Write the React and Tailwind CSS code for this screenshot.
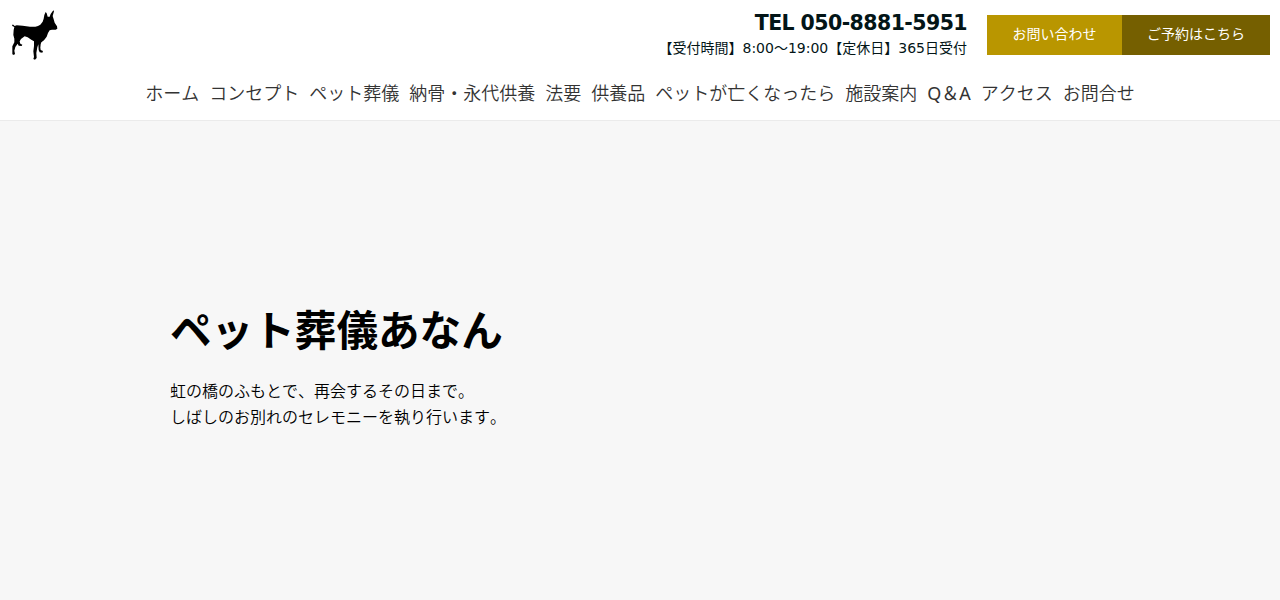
const navItems = [
  'ホーム',
  'コンセプト',
  'ペット葬儀',
  '納骨・永代供養',
  '法要',
  '供養品',
  'ペットが亡くなったら',
  '施設案内',
  'Q＆A',
  'アクセス',
  'お問合せ',
];

function DogLogo() {
  return (
    <svg viewBox="30 30 150 150" className="size-[50px]" aria-label="ペット葬儀あなん">
      <path
        fill="#000"
        d="M36 74 L40 74 L44 78 L50 76 L68 77 L90 80 L106 80 L114 78 L121 74 L128 65 L131 56 L133 45 L137 36 L140 40 L143 50 L149 50 L152 42 L160 31 L162 34 L158 48 L161 58 L164 68 L171 79 L172 86 L167 89 L156 89 L149 91 L144 99 L140 110 L132 121 L124 127 L122 133 L121 143 L122 150 L129 153 L127 158 L119 157 L116 150 L115 133 L112 142 L109 159 L110 174 L105 179 L100 177 L102 171 L100 154 L102 138 L102 124 L95 120 L83 112 L74 109 L63 117 L59 124 L61 131 L67 134 L65 138 L56 137 L53 131 L46 141 L43 152 L45 161 L42 165 L37 163 L37 139 L43 127 L43 116 L40 105 L41 90 L43 81 L37 78 Z"
      />
    </svg>
  );
}

export default function App() {
  return (
    <div className="flex h-[600px] flex-col overflow-hidden bg-[#f7f7f7] font-['DejaVu_Sans','Noto_Sans_CJK_JP',sans-serif] text-black [font-kerning:none]">
      <header className="flex h-[121px] shrink-0 flex-col border-b border-[#ebebeb] bg-white">
        <div className="flex h-[70px] items-start justify-between px-2.5 pt-2.5">
          <DogLogo />
          <div className="flex items-start gap-5">
            <div className="text-right text-[#031517]">
              <p className="pt-px text-[20.5px] leading-[25px] font-bold tracking-[-0.58px]">TEL 050-8881-5951</p>
              <p className="text-[14px] leading-[25px]">【受付時間】8:00～19:00【定休日】365日受付</p>
            </div>
            <div className="mt-[5px] flex h-10 text-[14px] leading-[38px] text-white">
              <a className="w-[135px] bg-[#b99600] text-center">お問い合わせ</a>
              <a className="w-[148px] bg-[#755f00] text-center">ご予約はこちら</a>
            </div>
          </div>
        </div>
        <nav className="flex h-[50px] justify-center gap-2.5 font-['Noto_Sans','Noto_Sans_CJK_JP',sans-serif] text-[18px] leading-[46px] text-[#333]">
          {navItems.map((item) => (
            <a
              key={item}
              className={item === 'Q＆A' ? 'whitespace-nowrap font-normal' : 'whitespace-nowrap font-[350]'}
            >
              {item}
            </a>
          ))}
        </nav>
      </header>
      <main className="flex flex-1 flex-col px-[170px] pt-[180px]">
        <h1 className="text-[41.6px] leading-[62px] font-bold">ペット葬儀あなん</h1>
        <p className="mt-4 text-[16px] leading-[26px] font-[350]">
          虹の橋のふもとで、再会するその日まで。
          <br />
          しばしのお別れのセレモニーを執り行います。
        </p>
      </main>
    </div>
  );
}
